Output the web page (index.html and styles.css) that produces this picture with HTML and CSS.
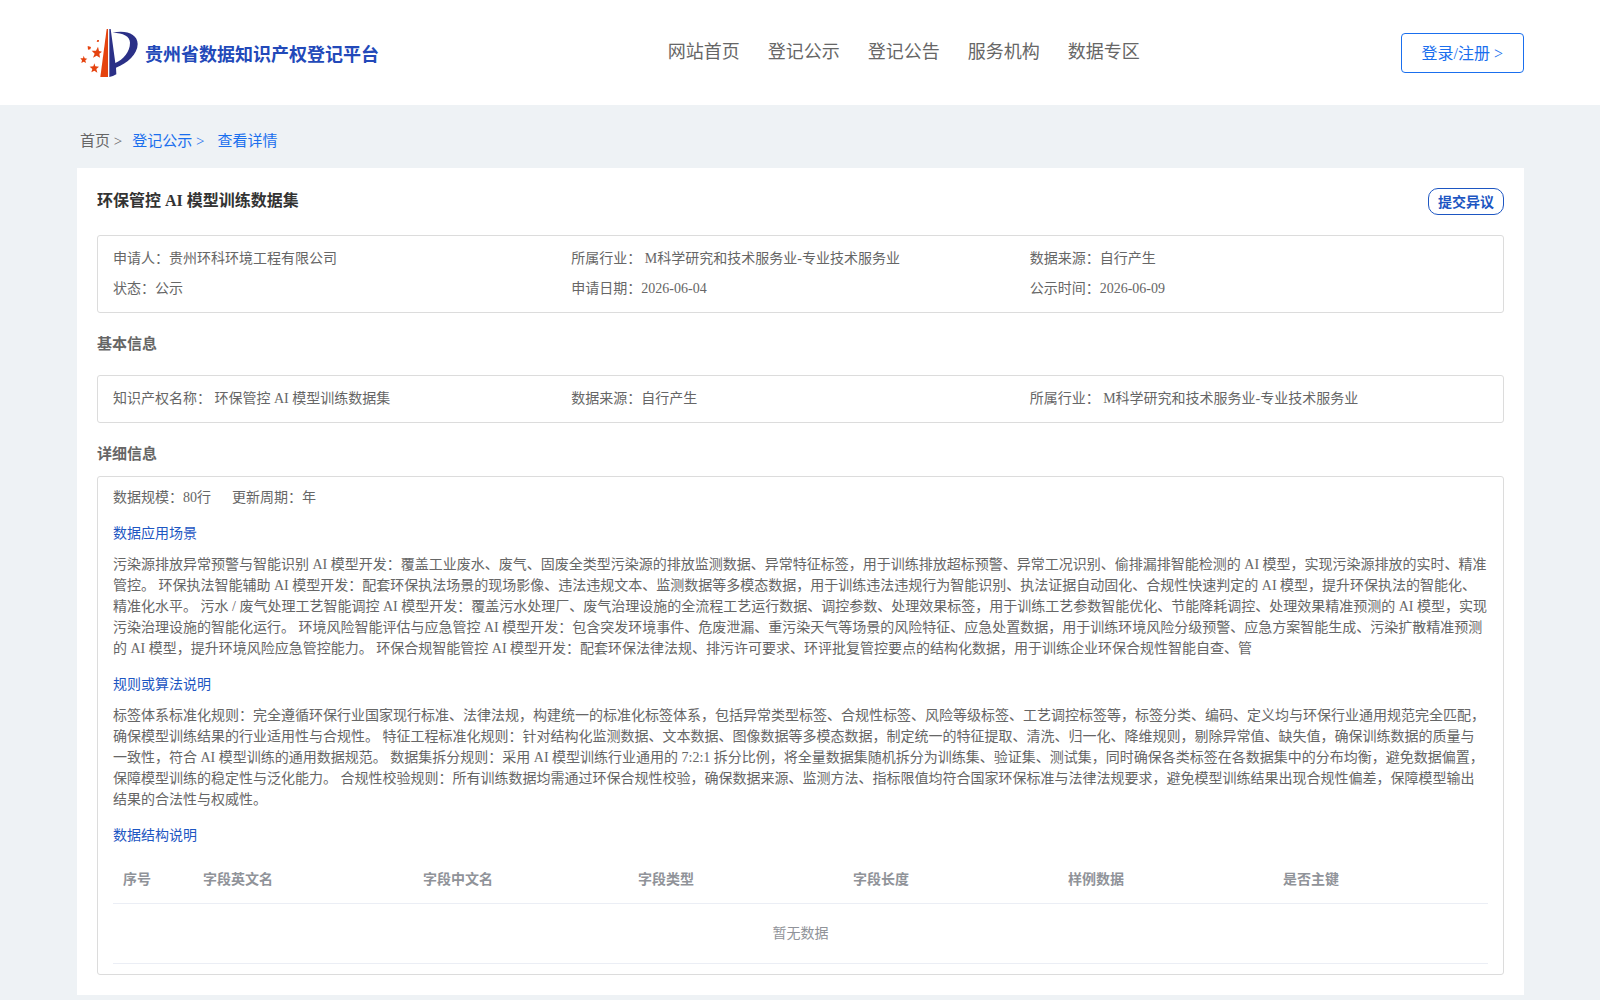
FILE: index.html
```html
<!DOCTYPE html>
<html lang="zh-CN">
<head>
    <meta charset="UTF-8">
    <meta name="viewport" content="width=device-width, initial-scale=1.0">
    <title>贵州省数据知识产权登记平台</title>
    <link rel="stylesheet" href="styles.css">
</head>
<body>

    <!-- 顶部导航 -->
    <header class="header">
        <a class="logo" href="#">
            <svg class="logo-icon" viewBox="12 18 174 150" aria-hidden="true">
                <path fill="#e5430f" d="M92 21 L96 21 L96 165 L73 165 Z"/>
                <path fill="#2b3087" d="M100 21 L104 21 L118 123 C142 112 162 90 162 62 C162 42 142 33 110 32 C150 23 185 36 185 66 C185 96 154 124 120 137 L121 157 Q111 163 100 165 Z"/>
                <g fill="#e5430f">
                    <path d="M66 74 L69 87 L78 89 L70 95 L72 107 L62 101 L51 107 L56 95 L47 86 L60 86 Z"/>
                    <path d="M55 124 L58 133 L69 134 L61 141 L64 152 L55 146 L46 151 L49 141 L41 134 L52 133 Z"/>
                    <path d="M23 101 L26 109 L34 110 L28 115 L30 123 L23 119 L16 123 L18 115 L13 109 L21 109 Z"/>
                    <path d="M35 72 L45 75 L43 82 L36 83 Z"/>
                    <path d="M64 54 L69 54 L68 60 L62 59 Z"/>
                </g>
            </svg>
            <span class="logo-text">贵州省数据知识产权登记平台</span>
        </a>
        <nav class="nav">
            <a href="#">网站首页</a>
            <a href="#">登记公示</a>
            <a href="#">登记公告</a>
            <a href="#">服务机构</a>
            <a href="#">数据专区</a>
        </nav>
        <button class="login-btn" type="button">登录/注册 &gt;</button>
    </header>

    <main class="main">
        <!-- 面包屑 -->
        <div class="breadcrumb">
            <a class="home" href="#">首页 &gt;</a>
            <a href="#">登记公示 &gt;</a>
            <a class="current" href="#">查看详情</a>
        </div>

        <div class="card">
            <div class="card-head">
                <h1>环保管控 AI 模型训练数据集</h1>
                <button class="objection-btn" type="button">提交异议</button>
            </div>

            <div class="info-box">
                <div>申请人：贵州环科环境工程有限公司</div>
                <div>所属行业： M科学研究和技术服务业-专业技术服务业</div>
                <div>数据来源：自行产生</div>
                <div>状态：公示</div>
                <div>申请日期：2026-06-04</div>
                <div>公示时间：2026-06-09</div>
            </div>

            <h2>基本信息</h2>
            <div class="info-box">
                <div>知识产权名称： 环保管控 AI 模型训练数据集</div>
                <div>数据来源：自行产生</div>
                <div>所属行业： M科学研究和技术服务业-专业技术服务业</div>
            </div>

            <h2 class="detail-title">详细信息</h2>
            <div class="detail-box">
                <div class="scale">
                    <span>数据规模：80行</span>
                    <span>更新周期：年</span>
                </div>

                <h3>数据应用场景</h3>
                <p>污染源排放异常预警与智能识别 AI 模型开发：覆盖工业废水、废气、固废全类型污染源的排放监测数据、异常特征标签，用于训练排放超标预警、异常工况识别、偷排漏排智能检测的 AI 模型，实现污染源排放的实时、精准管控。 环保执法智能辅助 AI 模型开发：配套环保执法场景的现场影像、违法违规文本、监测数据等多模态数据，用于训练违法违规行为智能识别、执法证据自动固化、合规性快速判定的 AI 模型，提升环保执法的智能化、精准化水平。 污水 / 废气处理工艺智能调控 AI 模型开发：覆盖污水处理厂、废气治理设施的全流程工艺运行数据、调控参数、处理效果标签，用于训练工艺参数智能优化、节能降耗调控、处理效果精准预测的 AI 模型，实现污染治理设施的智能化运行。 环境风险智能评估与应急管控 AI 模型开发：包含突发环境事件、危废泄漏、重污染天气等场景的风险特征、应急处置数据，用于训练环境风险分级预警、应急方案智能生成、污染扩散精准预测的 AI 模型，提升环境风险应急管控能力。 环保合规智能管控 AI 模型开发：配套环保法律法规、排污许可要求、环评批复管控要点的结构化数据，用于训练企业环保合规性智能自查、管</p>

                <h3>规则或算法说明</h3>
                <p>标签体系标准化规则：完全遵循环保行业国家现行标准、法律法规，构建统一的标准化标签体系，包括异常类型标签、合规性标签、风险等级标签、工艺调控标签等，标签分类、编码、定义均与环保行业通用规范完全匹配，确保模型训练结果的行业适用性与合规性。 特征工程标准化规则：针对结构化监测数据、文本数据、图像数据等多模态数据，制定统一的特征提取、清洗、归一化、降维规则，剔除异常值、缺失值，确保训练数据的质量与一致性，符合 AI 模型训练的通用数据规范。 数据集拆分规则：采用 AI 模型训练行业通用的 7:2:1 拆分比例，将全量数据集随机拆分为训练集、验证集、测试集，同时确保各类标签在各数据集中的分布均衡，避免数据偏置，保障模型训练的稳定性与泛化能力。 合规性校验规则：所有训练数据均需通过环保合规性校验，确保数据来源、监测方法、指标限值均符合国家环保标准与法律法规要求，避免模型训练结果出现合规性偏差，保障模型输出结果的合法性与权威性。</p>

                <h3>数据结构说明</h3>
                <table class="field-table">
                    <thead>
                        <tr>
                            <th class="col-index">序号</th>
                            <th class="col-en">字段英文名</th>
                            <th>字段中文名</th>
                            <th>字段类型</th>
                            <th>字段长度</th>
                            <th>样例数据</th>
                            <th>是否主键</th>
                        </tr>
                    </thead>
                    <tbody>
                        <tr>
                            <td class="empty" colspan="7">暂无数据</td>
                        </tr>
                    </tbody>
                </table>
            </div>
        </div>
    </main>

</body>
</html>
```
FILE: styles.css
```css
* {
    box-sizing: border-box;
}

body {
    margin: 0;
    background-color: #eef2f5;
    color: #666;
    font-family: "Liberation Serif", "Noto Sans CJK SC", serif;
    font-size: 14px;
    line-height: 21px;
    text-spacing-trim: space-all;
}

a {
    color: inherit;
    text-decoration: none;
}

button {
    background-color: #fff;
    font-family: inherit;
    cursor: pointer;
}

h1, h2, h3, p {
    margin: 0;
}

/* 顶部导航 */
.header {
    display: flex;
    justify-content: space-between;
    align-items: center;
    height: 105px;
    padding: 0 76px 0 80px;
    background-color: #fff;
}

.logo {
    display: flex;
    align-items: center;
    gap: 7px;
}

.logo-icon {
    width: 58px;
    height: 50px;
}

.logo-text {
    padding-top: 6px;
    color: #2249b9;
    font-size: 18px;
    font-weight: bold;
}

.nav {
    display: flex;
    font-size: 18px;
}

.nav a {
    margin-left: 28px;
}

.login-btn {
    height: 40px;
    padding: 0 20px 2px;
    border: 1px solid #1a6fee;
    border-radius: 4px;
    color: #1a6fee;
    font-size: 16px;
}

/* 主体 */
.main {
    padding: 0 76px 5px 77px;
}

.breadcrumb {
    display: flex;
    gap: 10px;
    padding: 26px 3px 16px;
    color: #1a6fee;
    font-size: 15px;
}

.breadcrumb .home {
    color: #666;
}

.breadcrumb .current {
    margin-left: 3px;
}

.card {
    padding: 20px;
    background-color: #fff;
}

.card-head {
    display: flex;
    justify-content: space-between;
    margin-bottom: 20px;
}

.card-head h1 {
    color: #333;
    font-size: 16px;
    line-height: 26px;
}

.objection-btn {
    height: 27px;
    padding: 0 9px 2px;
    border: 1px solid #1d56c2;
    border-radius: 10px;
    color: #1d56c2;
    font-size: 14px;
    font-weight: bold;
}

.info-box {
    display: grid;
    grid-template-columns: repeat(3, 1fr);
    padding: 8px 15px;
    border: 1px solid #dcdcdc;
    border-radius: 3px;
    line-height: 30px;
}

h2 {
    margin: 20px 0;
    font-size: 15px;
    line-height: 22px;
}

.detail-title {
    margin-bottom: 11px;
}

.detail-box {
    padding: 10px 15px;
    border: 1px solid #dcdcdc;
    border-radius: 3px;
}

.scale {
    display: flex;
    gap: 21px;
}

h3 {
    margin: 15px 0 10px;
    color: #1d56c2;
    font-size: 14px;
    font-weight: normal;
}

/* 字段表格 */
.field-table {
    width: 100%;
    table-layout: fixed;
    border-collapse: separate;
    border-spacing: 0;
    color: #909399;
}

.field-table th,
.field-table td {
    height: 48px;
    padding: 0 10px;
    border-bottom: 1px solid #ebeef5;
    text-align: left;
}

.field-table .col-index {
    width: 80px;
}

.field-table .col-en {
    width: 220px;
}

.field-table .empty {
    height: 60px;
    text-align: center;
}
```
